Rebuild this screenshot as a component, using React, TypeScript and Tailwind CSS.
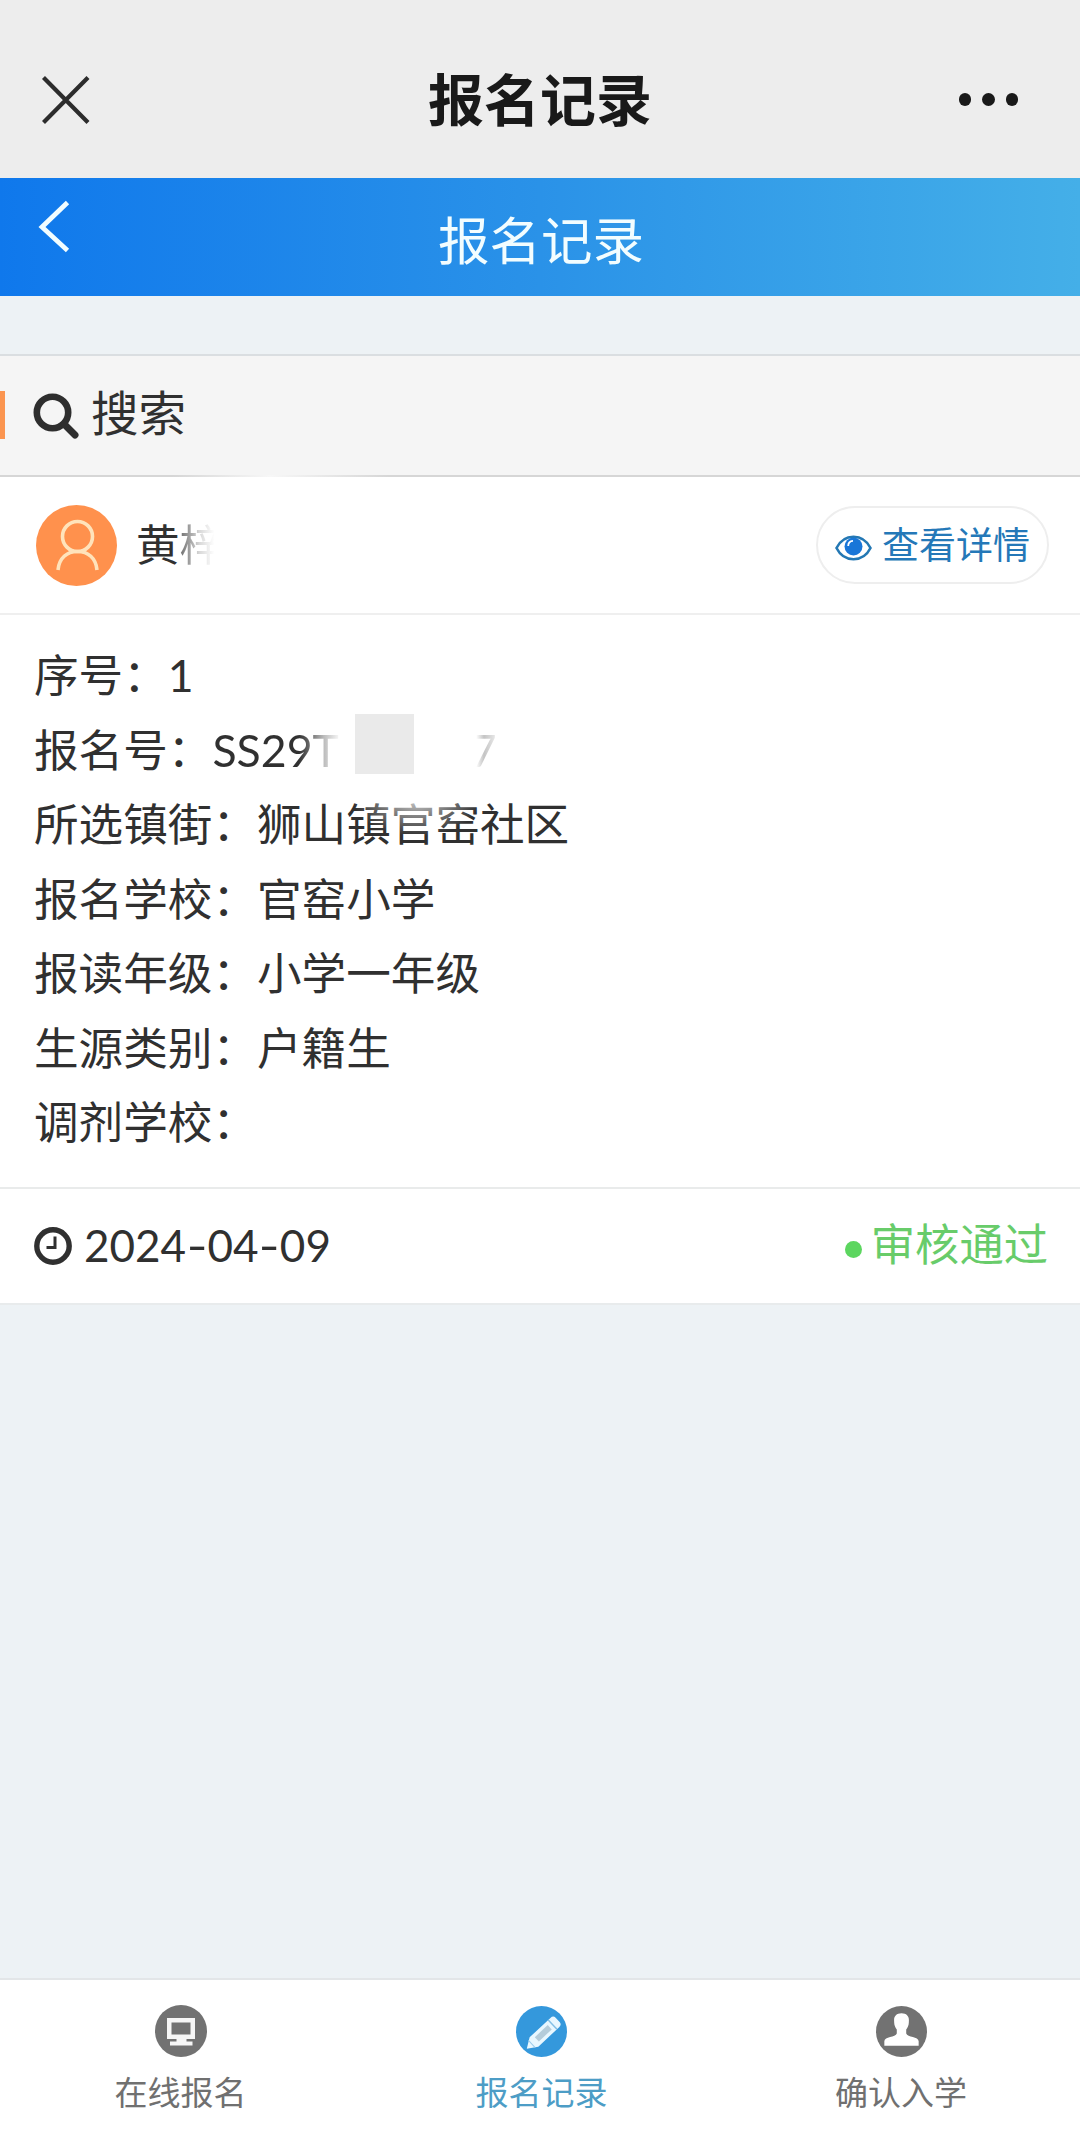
import React from 'react';

const fields = [
  { label: '所选镇街', value: '狮山镇官窑社区', faded: true },
  { label: '报名学校', value: '官窑小学' },
  { label: '报读年级', value: '小学一年级' },
  { label: '生源类别', value: '户籍生' },
  { label: '调剂学校', value: '' },
];

function StatusHeader() {
  return (
    <header className="flex h-[178px] items-start bg-[#ededed] pt-[66px] pr-[62px] pl-[41px]">
      <svg className="mt-[10px] h-12 w-[50px]" viewBox="0 0 50 48" fill="none" stroke="#2c2c2c" strokeWidth="4.2">
        <path d="M2.5 1.5 L47 46.5 M47 1.5 L2.5 46.5" />
      </svg>
      <h1 className="ml-[337px] text-[56px] leading-[68px] font-bold text-[#191919]">报名记录</h1>
      <div className="mt-[27px] ml-auto flex gap-[11px]">
        <span className="size-[12.500px] rounded-full bg-[#191919]" />
        <span className="size-[12.500px] rounded-full bg-[#191919]" />
        <span className="size-[12.500px] rounded-full bg-[#191919]" />
      </div>
    </header>
  );
}

function TitleBar() {
  return (
    <div className="flex h-[118px] items-start bg-linear-to-r from-[#0f78ec] via-[#2a92e8] to-[#44afe8] pl-[38px]">
      <svg className="mt-[22px] h-[54px] w-[32px]" viewBox="0 0 32 54" fill="none" stroke="#f2fdff" strokeWidth="4.8">
        <path d="M29.5 2.5 L4 27 L29.5 50.5" />
      </svg>
      <h2 className="mt-[29px] ml-[368px] text-[51.5px] leading-[66px] text-[#f2fdff]">报名记录</h2>
    </div>
  );
}

function SearchRow() {
  return (
    <div className="flex h-[121px] items-center border-t-2 border-[#dadee1] bg-[#f5f5f5]">
      <span className="-mt-px h-12 w-[5px] bg-[#fb9550]" />
      <svg className="ml-7 h-[46px] w-[46px]" viewBox="0 0 46 46" fill="none" stroke="#2e2e2e">
        <circle cx="19.5" cy="19.5" r="15.7" strokeWidth="6.6" />
        <path d="M31 31 L42 42" strokeWidth="7" strokeLinecap="round" />
      </svg>
      <span className="-mt-[5px] ml-3 text-[47.5px] leading-[60px] text-[#303030]">搜索</span>
    </div>
  );
}

function PersonRow() {
  return (
    <div className="flex h-[138px] items-center border-b-2 border-[#efefef] pr-[31px] pl-[36px]">
      <svg className="size-[81px]" viewBox="0 0 81 81" fill="none">
        <circle cx="40.5" cy="40.5" r="40.5" fill="#ff914d" />
        <g stroke="#ffe3bb" strokeWidth="3.6">
          <circle cx="41.5" cy="31.5" r="15" />
          <path d="M22 65 C23 53 31 46.5 41.5 46.5 S60 53 61 65" />
        </g>
      </svg>
      <span className="-mt-[3px] ml-[19px] text-[43.5px] leading-[60px] text-[#303030]">黄</span>
      <span className="-mt-[3px] bg-linear-to-r from-[#707070] from-0% via-[#d8d8d8] via-45% to-white to-80% bg-clip-text text-[43.5px] leading-[60px] text-transparent">
        梓
      </span>
      <button className="ml-auto flex h-[78px] w-[233px] items-center rounded-full border-2 border-[#eeeeee] pl-[17px]">
        <svg className="mt-[6px] h-[26px] w-[37px]" viewBox="0 0 37 26" fill="none">
          <path d="M1.5 13 C9 -2 28 -2 35.5 13 C28 28 9 28 1.5 13Z" stroke="#2478b4" strokeWidth="2.6" />
          <circle cx="18.5" cy="11.5" r="9" fill="#1976d8" />
          <path d="M13.2 11 C13.2 8 15 6 18 5.8" stroke="#ffffff" strokeWidth="1.8" />
        </svg>
        <span className="-mt-px ml-[10px] text-[37px] leading-[50px] whitespace-nowrap text-[#2478b8]">查看详情</span>
      </button>
    </div>
  );
}

function Details() {
  return (
    <div className="h-[574px] border-b-2 border-[#e9ebeb] pt-[23px] pl-[34px] text-[44.6px] leading-[74.5px] text-[#303030]">
      <div className="h-[74.5px] whitespace-nowrap">序号：1</div>
      <div className="flex h-[74.5px] items-center whitespace-nowrap">
        <span>报名号：</span>
        <span className="bg-linear-to-r from-[#303030] from-68% via-[#bcbcbc] via-88% to-[#f7f7f7] bg-clip-text text-transparent">
          SS29T
        </span>
        <span className="-mt-[11px] ml-[16px] h-[60px] w-[59px] bg-[#eaeaea]" />
        <span className="ml-[57px] bg-linear-to-r from-[#ffffff] from-20% via-[#c4c4c4] via-50% to-[#ededed] bg-clip-text text-transparent">7</span>
      </div>
      {fields.map((field) => (
        <div key={field.label} className="relative flex h-[74.5px] whitespace-nowrap">
          <span>{field.label}：</span>
          <span>{field.value}</span>
          {field.faded && (
            <span className="absolute top-0 left-[300px] h-[60px] w-[150px] bg-radial-[at_55%_20%] from-white/75 to-transparent to-55%" />
          )}
        </div>
      ))}
    </div>
  );
}

function CardFooter() {
  return (
    <div className="flex h-[116px] items-center border-b-2 border-[#e8ebec] pr-[32px] pl-[34px]">
      <svg className="size-[38px]" viewBox="0 0 38 38" fill="none" stroke="#303030">
        <circle cx="19" cy="19" r="16.2" strokeWidth="5.4" />
        <path d="M21 9.500 V20.500 H12.500" strokeWidth="3" />
      </svg>
      <span className="-mt-[3px] ml-[12px] text-[44px] leading-[60px] text-[#303030]">
        2024<span className="mx-[2.500px] inline-block scale-x-130">-</span>04
        <span className="mx-[2.500px] inline-block scale-x-130">-</span>09
      </span>
      <span className="mt-[6px] ml-auto size-[17px] rounded-full bg-[#5cd65f]" />
      <span className="-mt-[4px] ml-[9px] text-[44.300px] leading-[60px] text-[#68cc6a]">审核通过</span>
    </div>
  );
}

function TabBar() {
  return (
    <nav className="grid h-[157px] grid-cols-[361px_361px_358px] border-t-2 border-[#e3e6e8] bg-white text-[33px] leading-[44px] text-[#707070]">
      <div className="flex flex-col items-center pt-[25px]">
        <svg className="size-[52px]" viewBox="0 0 52 52">
          <circle cx="26" cy="26" r="26" fill="#727272" />
          <path fillRule="evenodd" fill="#f6f6f6" d="M12 13 H40 V34 H31.5 V36.5 H37.5 V40.5 H15 V36.5 H21.5 V34 H12Z M16.5 17.5 V29.5 H35.5 V17.5Z" />
        </svg>
        <span className="mt-[13px]">在线报名</span>
      </div>
      <div className="flex flex-col items-center pt-[26px] text-[#4d9dc6]">
        <svg className="size-[51px]" viewBox="0 0 52 52">
          <circle cx="26" cy="26" r="26" fill="#3498dc" />
          <g transform="translate(11 43.5) rotate(-43)">
            <path d="M0 0 L10 -6.500 H39 Q43 -6.500 43 -3 V3 Q43 6.500 39 6.500 H10Z" fill="#e8f7ff" />
            <rect x="14" y="-3" width="18" height="6" fill="#b4ccda" />
            <path d="M36 -6.500 V6.500" stroke="#83bfe5" strokeWidth="1.5" />
            <path d="M7 -5 V5" stroke="#9bcbea" strokeWidth="1" />
          </g>
        </svg>
        <span className="mt-[13px]">报名记录</span>
      </div>
      <div className="flex flex-col items-center pt-[26px]">
        <svg className="size-[51px]" viewBox="0 0 52 52">
          <circle cx="26" cy="26" r="26" fill="#727272" />
          <path
            fill="#ffffff"
            d="M26 7.5 C31.5 7.5 34 11 33.5 15.5 C33.7 20 32 22 30.8 24 V28 C32 32 43.5 31 43.5 36 V40.5 H8.5 V36 C8.5 31 20 32 21.2 28 V24 C20 22 18.3 20 18.5 15.5 C18 11 20.5 7.5 26 7.5Z"
          />
        </svg>
        <span className="mt-[13px]">确认入学</span>
      </div>
    </nav>
  );
}

export default function App() {
  return (
    <div className="flex h-[2135px] w-[1080px] flex-col overflow-hidden bg-[#edf2f5] font-[Lato,'Noto_Sans_CJK_SC',sans-serif]">
      <StatusHeader />
      <TitleBar />
      <div className="h-[58px]" />
      <SearchRow />
      <main className="bg-white">
        <div className="h-[2px] bg-linear-to-r from-[#d6d6d6] from-16% via-[#f7f7f7] via-25% to-[#d6d6d6] to-36%" />
        <PersonRow />
        <Details />
        <CardFooter />
      </main>
      <div className="flex-1" />
      <TabBar />
    </div>
  );
}
